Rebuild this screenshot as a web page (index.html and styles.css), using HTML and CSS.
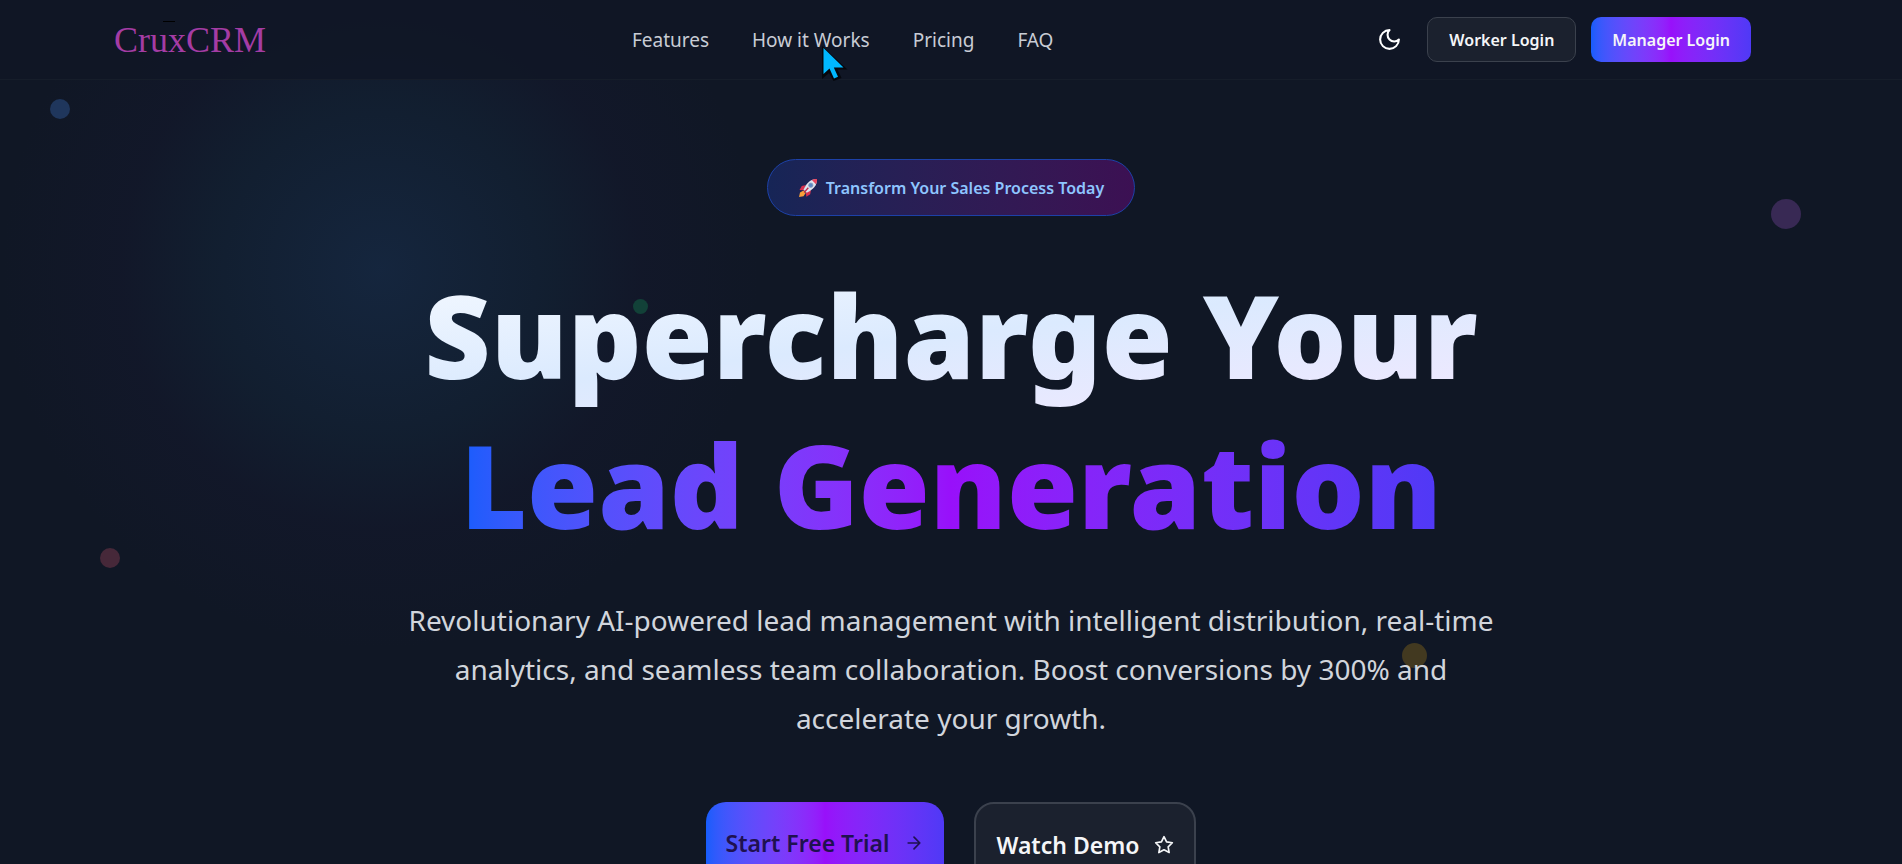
FILE: index.html
```html
<!DOCTYPE html>
<html lang="en">
<head>
<meta charset="utf-8">
<meta name="viewport" content="width=device-width, initial-scale=1">
<title>CruxCRM</title>
<link rel="stylesheet" href="styles.css">
</head>
<body>
<div class="page">
  <header class="header">
    <div class="header-inner">
      <a class="logo" href="#">CruxCRM</a>
      <nav class="nav" aria-label="Main">
        <a href="#features">Features</a>
        <a href="#how">How it Works</a>
        <a href="#pricing">Pricing</a>
        <a href="#faq">FAQ</a>
      </nav>
      <div class="actions">
        <button class="theme-toggle" type="button" aria-label="Toggle theme">
          <svg class="icon-moon" viewBox="0 0 24 24" aria-hidden="true"><path d="M12 3a6 6 0 0 0 9 9 9 9 0 1 1-9-9Z"/></svg>
        </button>
        <button class="btn btn-outline" type="button">Worker Login</button>
        <button class="btn btn-gradient" type="button">Manager Login</button>
      </div>
    </div>
  </header>

  <main class="hero">
    <span class="dot dot-blue"></span>
    <span class="dot dot-purple"></span>
    <span class="dot dot-green"></span>
    <span class="dot dot-red"></span>
    <span class="dot dot-yellow"></span>
    <div class="hero-content">
      <div class="badge">
        <svg class="icon-rocket" viewBox="0 0 20 20" aria-hidden="true">
          <path fill="#f9a13a" d="M5.500 12.500 2 14.500 1 19l4.500-.8 2.300-3.400Z"/>
          <path fill="#d9304f" d="M8 7 3.800 8 1.500 12l4 .2ZM13 12l-.8 4.300-3.800 2.500-.6-4.100Z"/>
          <path fill="#dfe3ee" d="M19 1c-6-.2-10.200 3.300-13.500 10.700l3.200 3.100C15.500 11.500 19.200 7 19 1Z"/>
          <path fill="#e8425c" d="M19 1c-2-.1-3.600.2-5.200.9L18 6.300C18.800 4.600 19.100 2.900 19 1Z"/>
          <circle cx="12.800" cy="7.200" r="2.200" fill="#5c86c4" stroke="#8d9cb8" stroke-width=".8"/>
          <path fill="#c02848" d="m9.800 9.300 1 .9-4.300 4.700-.9-.8Z"/>
        </svg>
        <span>Transform Your Sales Process Today</span>
      </div>
      <h1 class="title">
        <span class="title-light">Supercharge Your</span>
        <span class="title-vivid">Lead Generation</span>
      </h1>
      <p class="lead">Revolutionary AI-powered lead management with intelligent distribution, real-time analytics, and seamless team collaboration. Boost conversions by 300% and accelerate your growth.</p>
      <div class="cta">
        <button class="cta-btn cta-primary" type="button">Start Free Trial
          <svg class="icon-cta" viewBox="0 0 24 24" aria-hidden="true"><path d="M5 12h14M12 5l7 7-7 7"/></svg>
        </button>
        <button class="cta-btn cta-secondary" type="button">Watch Demo
          <svg class="icon-cta" viewBox="0 0 24 24" aria-hidden="true"><path d="M12 2l3.090 6.260L22 9.270l-5 4.870 1.180 6.880L12 17.770l-6.180 3.250L7 14.140 2 9.270l6.910-1.010L12 2Z"/></svg>
        </button>
      </div>
    </div>
  </main>
  <svg class="pointer" viewBox="0 0 28 36" aria-hidden="true">
    <path fill="#05070d" d="M1 0v33l7-6 4.500 8 8-3-4-8.500h10Z"/>
    <path fill="#00b8ff" d="M2.500 2v26l6-5.500 4.500 10 4-1.700-4.200-9.300h9.700Z"/>
  </svg>
</div>
</body>
</html>
```

FILE: styles.css
```css
* {
  box-sizing: border-box;
}

body {
  margin: 0;
  background: #111827;
  color: #fff;
  font-family: "Noto Sans", "Open Sans", sans-serif;
}

button {
  font-family: inherit;
  cursor: pointer;
}

.page {
  position: relative;
  display: flex;
  flex-direction: column;
  height: 100vh;
  overflow: hidden;
  background:
    radial-gradient(circle 380px at 20% 270px, rgba(38, 90, 150, 0.22), rgba(30, 80, 120, 0.13) 45%, rgba(40, 30, 90, 0.08) 68%, transparent),
    #101725;
}

.header {
  flex: none;
  padding: 0 40px;
  border-bottom: 1px solid #161d2a;
  background: rgba(16, 23, 37, 0.8);
}

.header-inner {
  display: flex;
  align-items: center;
  justify-content: space-between;
  max-width: 1600px;
  height: 79px;
  margin: 0 auto;
}

.logo {
  position: relative;
  width: 204px;
  margin-left: -37px;
  color: #a43ca4;
  font-family: "Liberation Serif", serif;
  font-size: 36px;
  line-height: 40px;
  text-decoration: none;
}

.logo::before {
  content: "";
  position: absolute;
  top: 1px;
  left: 49px;
  width: 12px;
  height: 1px;
  background: #000;
}

.nav {
  display: flex;
  gap: 43px;
}

.nav a {
  color: #c8ccd5;
  font-size: 19px;
  line-height: 28px;
  text-decoration: none;
}

.actions {
  display: flex;
  align-items: center;
  gap: 15px;
}

.theme-toggle {
  display: grid;
  place-items: center;
  width: 45px;
  height: 45px;
  padding: 0;
  border: 0;
  background: none;
}

.icon-moon {
  width: 25px;
  height: 25px;
  fill: none;
  stroke: #fff;
  stroke-width: 2;
  stroke-linecap: round;
  stroke-linejoin: round;
}

.btn {
  height: 45px;
  padding: 0 21px;
  border-radius: 10px;
  color: #f5f6f8;
  font-size: 16px;
  font-weight: 600;
}

.btn-outline {
  border: 1px solid #3b414d;
  background: #1b212e;
}

.btn-gradient {
  border: 0;
  background: linear-gradient(90deg in oklab, #155dfc, #9810fa 50%, #4f39f6);
}

.hero {
  position: relative;
  flex: 1;
  padding: 79px 40px 0;
}

.hero-content {
  position: relative;
  display: flex;
  flex-direction: column;
  align-items: center;
  max-width: 1280px;
  margin: 0 auto;
  text-align: center;
}

.badge {
  display: flex;
  align-items: center;
  gap: 8px;
  height: 57px;
  padding: 0 30px;
  border: 1px solid #1d41a8;
  border-radius: 29px;
  background: linear-gradient(90deg in oklab, #162556, #3c1053);
  color: #8ec5ff;
  font-size: 16px;
  font-weight: 600;
}

.icon-rocket {
  width: 20px;
  height: 20px;
}

.title {
  width: 100%;
  margin: 44px 0 0;
  font-size: 115px;
  font-weight: 900;
  line-height: 150px;
}

.title-light,
.title-vivid {
  display: block;
  background-clip: text;
  -webkit-background-clip: text;
  color: transparent;
}

.title-light {
  background-image: linear-gradient(to bottom right in oklab, #f8fbff, #dbeafe 50%, #f3e8ff);
}

.title-vivid {
  width: fit-content;
  margin: 0 auto;
  background-image: linear-gradient(90deg in oklab, #155dfc, #9810fa 50%, #4f39f6);
}

.lead {
  max-width: 1120px;
  margin: 36px 0 0;
  color: #d1d5dc;
  font-size: 28px;
  line-height: 49px;
}

.cta {
  display: flex;
  align-items: flex-start;
  gap: 30px;
  margin-top: 59px;
}

.cta-btn {
  display: flex;
  align-items: center;
  gap: 15px;
  border-radius: 20px;
  padding: 21px 20px;
  font-size: 23px;
  font-weight: 600;
  line-height: 40px;
}

.cta-primary {
  border: 0;
  background: linear-gradient(90deg in oklab, #155dfc, #9810fa 50%, #4f39f6);
  color: #1f1150;
}

.cta-secondary {
  border: 2px solid #3b414d;
  background: #1b212e;
  color: #f5f6f8;
}

.icon-cta {
  width: 20px;
  height: 20px;
  fill: none;
  stroke: currentColor;
  stroke-width: 2;
  stroke-linecap: round;
  stroke-linejoin: round;
}

.dot {
  position: absolute;
  border-radius: 50%;
}

.dot-blue {
  top: 19px;
  left: 50px;
  width: 20px;
  height: 20px;
  background: #1f365c;
}

.dot-purple {
  top: 119px;
  right: 101px;
  width: 30px;
  height: 30px;
  background: #382954;
}

.dot-green {
  top: 219px;
  left: 33.3%;
  width: 15px;
  height: 15px;
  background: #124138;
}

.dot-red {
  top: 468px;
  left: 100px;
  width: 20px;
  height: 20px;
  background: #462839;
}

.dot-yellow {
  top: 563px;
  right: 25%;
  width: 25px;
  height: 25px;
  background: #423920;
}

.pointer {
  position: absolute;
  top: 46px;
  left: 821px;
  width: 28px;
  height: 36px;
}
```
